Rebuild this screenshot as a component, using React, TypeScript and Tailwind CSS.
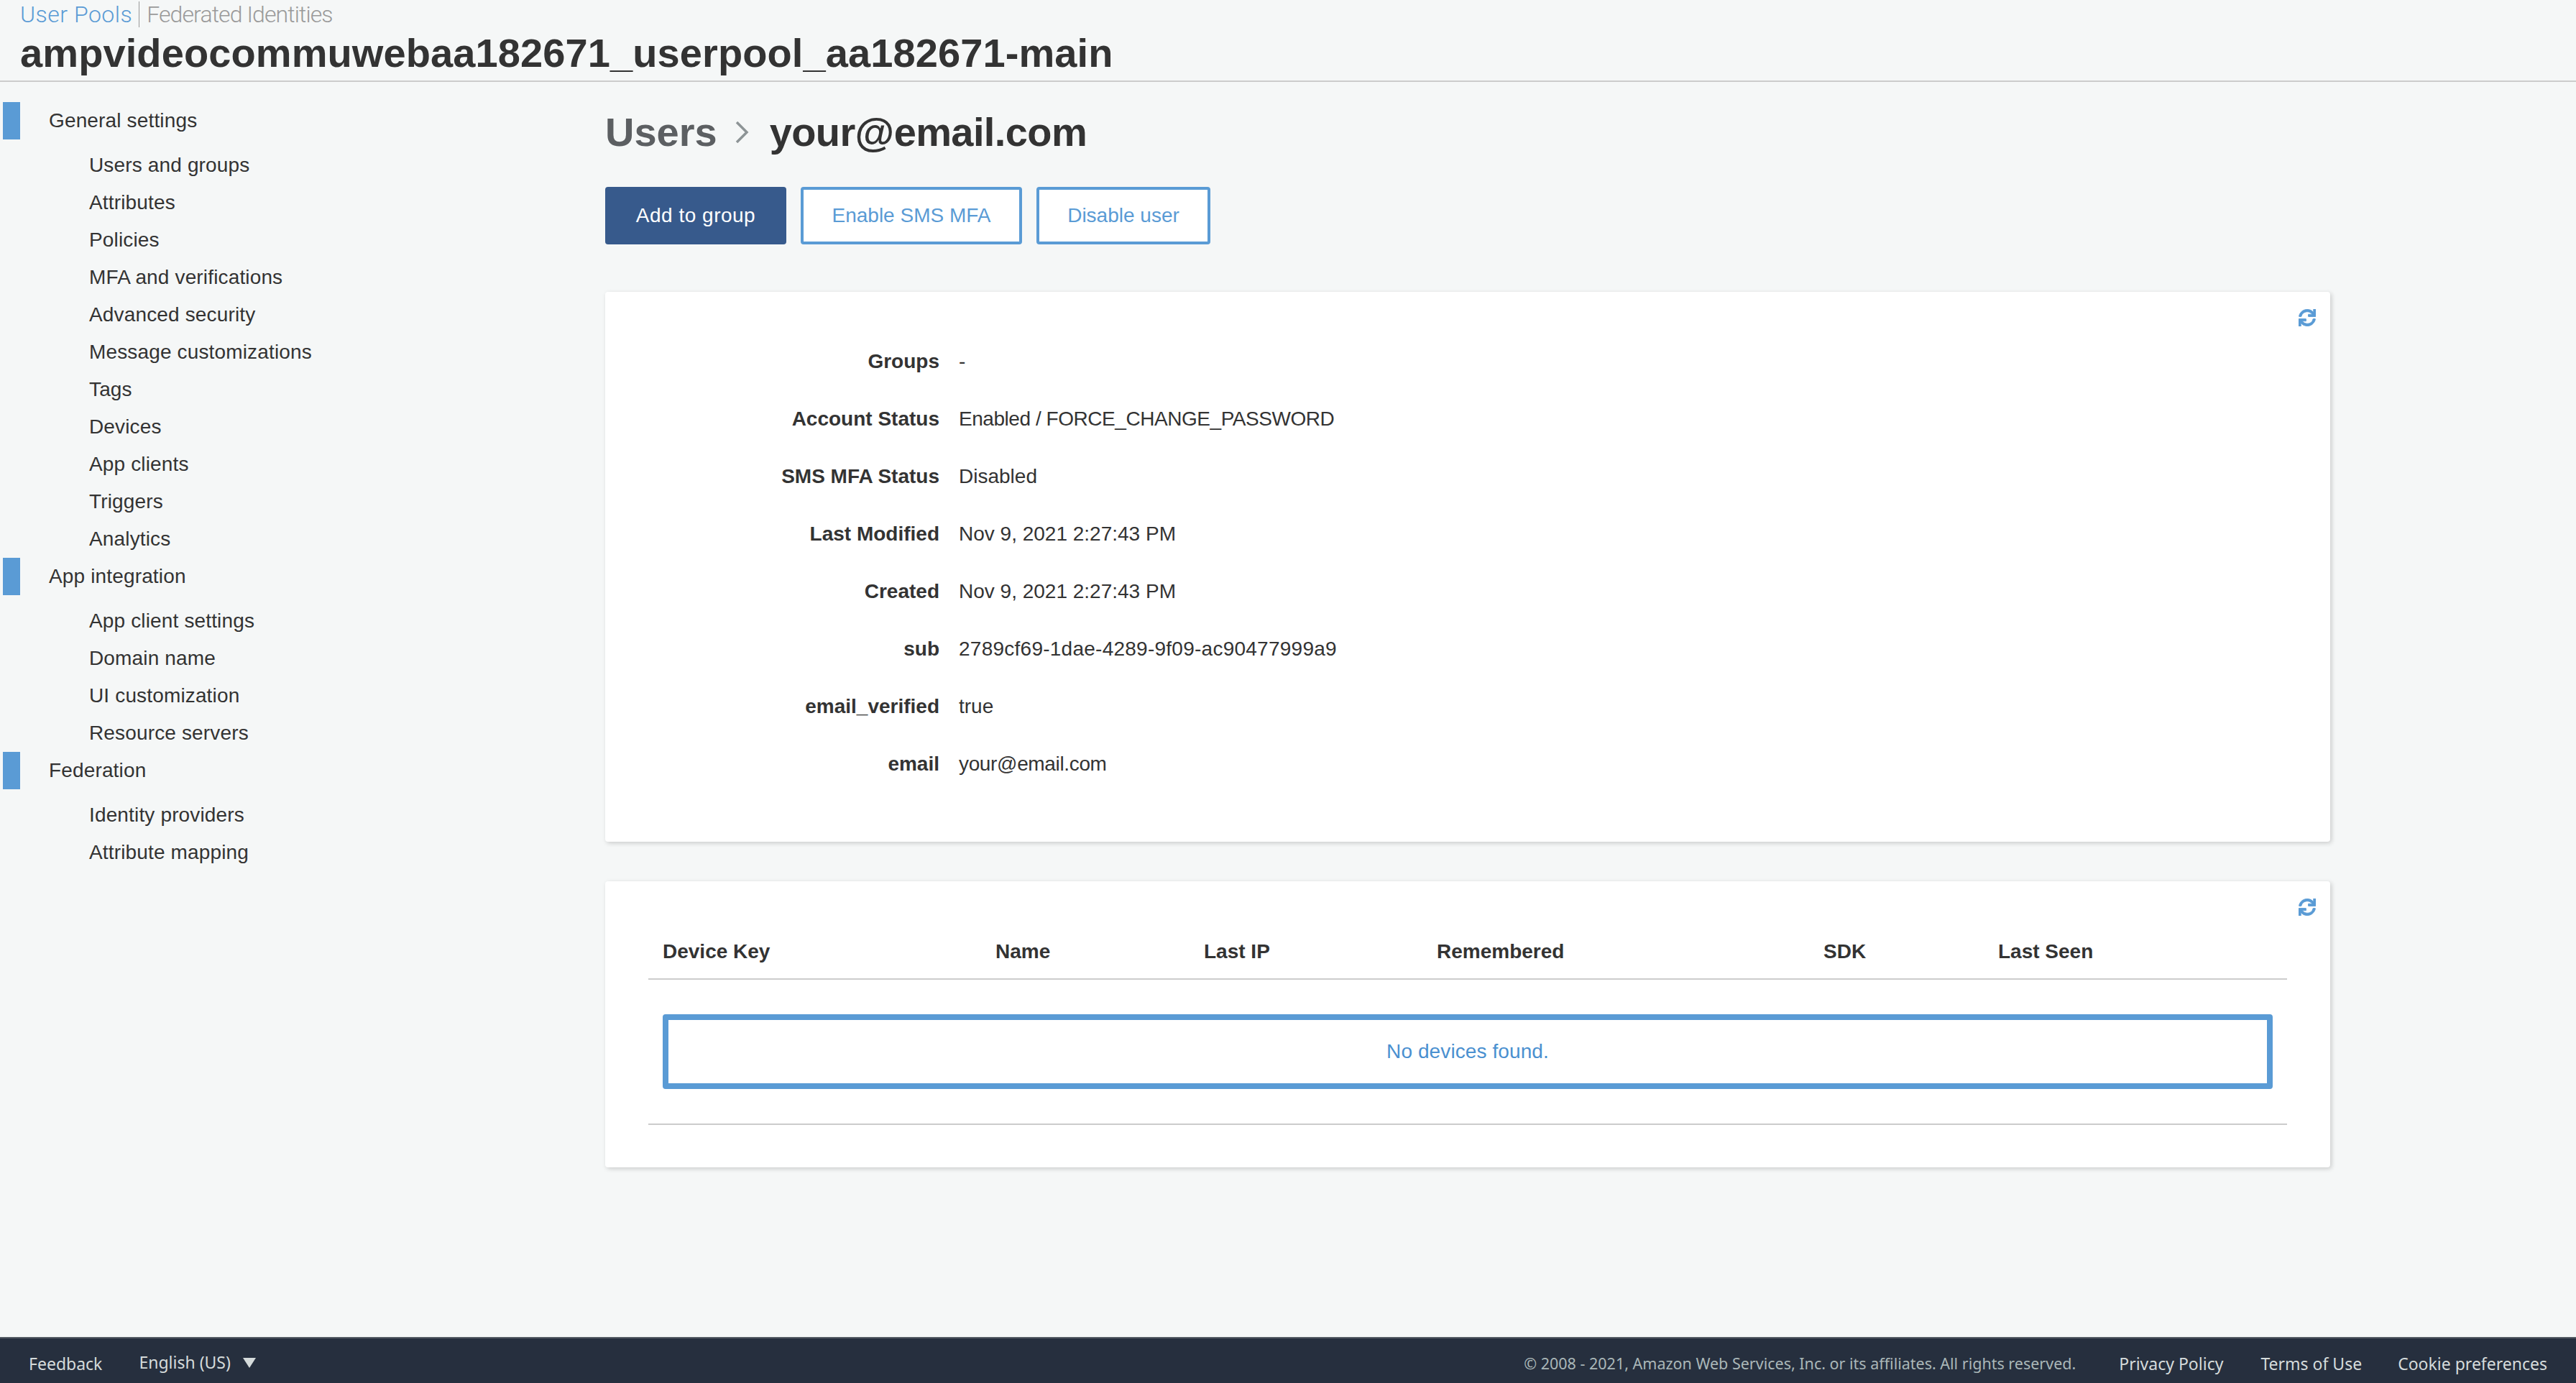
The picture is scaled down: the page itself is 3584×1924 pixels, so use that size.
import React from "react";
import { FaSync } from "react-icons/fa";

const generalLinks = ["Users and groups", "Attributes", "Policies", "MFA and verifications", "Advanced security", "Message customizations", "Tags", "Devices", "App clients", "Triggers", "Analytics"];
const appLinks = ["App client settings", "Domain name", "UI customization", "Resource servers"];
const fedLinks = ["Identity providers", "Attribute mapping"];

const details = [
  { label: "Groups", value: "-", cls: "" },
  { label: "Account Status", value: "Enabled / FORCE_CHANGE_PASSWORD", cls: "tracking-[-0.45px]" },
  { label: "SMS MFA Status", value: "Disabled", cls: "" },
  { label: "Last Modified", value: "Nov 9, 2021 2:27:43 PM", cls: "" },
  { label: "Created", value: "Nov 9, 2021 2:27:43 PM", cls: "" },
  { label: "sub", value: "2789cf69-1dae-4289-9f09-ac90477999a9", cls: "tracking-[0.25px]" },
  { label: "email_verified", value: "true", cls: "" },
  { label: "email", value: "your@email.com", cls: "tracking-[-0.35px]" },
];

function NavSection({ title, links }: { title: string; links: string[] }) {
  return (
    <div className="tracking-[0.15px]">
      <div className="flex h-[52px] items-center">
        <div className="ml-1 h-[52px] w-6 bg-[#5a9bd5]" />
        <span className="ml-10">{title}</span>
      </div>
      <ul className="mt-2.5">
        {links.map((l) => (
          <li key={l} className="flex h-[52px] items-center pl-[124px]">{l}</li>
        ))}
      </ul>
    </div>
  );
}

function RefreshIcon() {
  return <FaSync className="absolute top-6 right-5 h-6 w-6 text-[#5a9bd5]" stroke="currentColor" strokeWidth={18} />;
}

export default function App() {
  return (
    <div className="flex min-h-[1924px] flex-col bg-[#f5f7f7] font-['Liberation_Sans',Arial,sans-serif] text-[28px] text-[#333]">
      <header className="h-[114px] border-b-2 border-[#ccc] pl-7">
        <div className="flex h-10 items-center font-['Roboto',sans-serif] text-[32px] font-light">
          <span className="tracking-[0.5px] text-[#5a9bd5]">User Pools</span>
          <span className="mr-[10px] ml-[9px] h-9 w-px bg-[#999]" />
          <span className="tracking-[-0.9px] text-[#9a9a9a]">Federated Identities</span>
        </div>
        <h1 className="mt-1 text-[56px] leading-[60px] font-bold tracking-[0.1px]">ampvideocommuwebaa182671_userpool_aa182671-main</h1>
      </header>

      <div className="flex flex-1">
        <nav className="w-[842px] shrink-0 pt-7">
          <NavSection title="General settings" links={generalLinks} />
          <NavSection title="App integration" links={appLinks} />
          <NavSection title="Federation" links={fedLinks} />
        </nav>

        <main className="w-[2400px] pt-[40px]">
          <div className="flex h-[60px] items-center text-[56px] font-bold">
            <span className="text-[#5c5f62]">Users</span>
            <svg className="mr-[29px] ml-[25px] h-[30px] w-[19px] text-[#8d9496]" viewBox="0 0 19 30" fill="none" stroke="currentColor" strokeWidth="3.5"><path d="M2 1l14 14-14 14" /></svg>
            <span className="tracking-[-0.6px]">your@email.com</span>
          </div>
          <div className="mt-[46px] flex gap-5">
            <button className="h-20 w-[252px] rounded-sm bg-[#375a8c] tracking-[0.5px] text-white">Add to group</button>
            <button className="h-20 w-[308px] rounded-sm border-4 border-[#5a9bd5] bg-white text-[#5a9bd5]">Enable SMS MFA</button>
            <button className="h-20 w-[242px] rounded-sm border-4 border-[#5a9bd5] bg-white text-[#5a9bd5]">Disable user</button>
          </div>

          <section className="relative mt-[66px] h-[765px] rounded-sm bg-white pt-[57px] shadow-[2px_2px_6px_rgba(0,0,0,0.18)]">
            <RefreshIcon />
            {details.map((d) => (
              <div key={d.label} className="flex h-20 items-center">
                <div className="w-[465px] text-right font-bold">{d.label}</div>
                <div className={`ml-[27px] ${d.cls}`}>{d.value}</div>
              </div>
            ))}
          </section>

          <section className="relative mt-[55px] h-[398px] rounded-sm bg-white px-[60px] pt-[58px] shadow-[2px_2px_6px_rgba(0,0,0,0.18)]">
            <RefreshIcon />
            <div className="grid h-[79px] grid-cols-[463px_290px_324px_538px_243px_1fr] items-center border-b-2 border-[#ccc] pt-0.5 pl-5 font-bold">
              <span>Device Key</span>
              <span>Name</span>
              <span>Last IP</span>
              <span>Remembered</span>
              <span>SDK</span>
              <span>Last Seen</span>
            </div>
            <div className="border-b-2 border-[#ccc] px-5 py-[48px]">
              <div className="flex h-[104px] items-center justify-center rounded-sm border-8 border-[#5a9bd5] tracking-[0.1px] text-[#4a90d0]">No devices found.</div>
            </div>
          </section>
        </main>
      </div>

      <footer className="flex h-16 items-center justify-between border-t-2 border-[#545b64] bg-[#262f3e] pt-[9px] pr-10 pl-10 font-['Noto_Sans',sans-serif] text-[23px] text-[#d5dbdb]">
        <div className="flex items-center">
          <span>Feedback</span>
          <span className="-mt-1 ml-[51px]">English (US)</span>
          <span className="-mt-1 ml-[17px] h-0 w-0 border-x-[9px] border-t-[14px] border-x-transparent border-t-[#d5dbdb]" />
        </div>
        <div className="flex items-center">
          <span className="text-[21.5px] text-[#aab7b8]">© 2008 - 2021, Amazon Web Services, Inc. or its affiliates. All rights reserved.</span>
          <span className="ml-[60px]">Privacy Policy</span>
          <span className="ml-[52px]">Terms of Use</span>
          <span className="ml-[50px]">Cookie preferences</span>
        </div>
      </footer>
    </div>
  );
}
